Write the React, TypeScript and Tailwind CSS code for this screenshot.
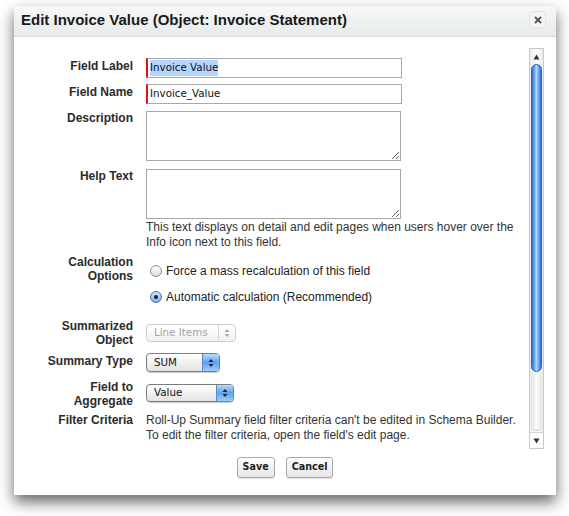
import type { ReactNode } from 'react'

const label =
  "w-[119px] shrink-0 text-right text-[12px] font-bold leading-[14px] text-[#2b2b2b]"
const body = "text-[12px] leading-[15px] text-[#333]"
const ui = "font-['DejaVu_Sans',sans-serif] text-[10.3px]"

function Row({
  name,
  className = '',
  labelClass = '',
  children,
}: {
  name: ReactNode
  className?: string
  labelClass?: string
  children: ReactNode
}) {
  return (
    <div className={`flex ${className}`}>
      <div className={`${label} ${labelClass}`}>{name}</div>
      <div className="ml-[13px] min-w-0">{children}</div>
    </div>
  )
}

function Arrows({ color }: { color: string }) {
  return (
    <svg width="6" height="10" viewBox="0 0 6 10">
      <path d="M3 1 L5.5 4 L0.5 4 Z" fill={color} />
      <path d="M3 9 L5.5 6 L0.5 6 Z" fill={color} />
    </svg>
  )
}

function Select({
  value,
  className,
  disabled = false,
}: {
  value: string
  className: string
  disabled?: boolean
}) {
  return (
    <div
      className={`flex overflow-hidden rounded-[4px] border ${className} ${
        disabled
          ? 'border-[#cdcdcd] bg-gradient-to-b from-white to-[#f1f1f1] text-[#a6a6a6]'
          : 'border-[#7c7c7c] bg-gradient-to-b from-white to-[#e4e4e4] text-[#111] shadow-[0_1px_1px_rgba(0,0,0,0.2)]'
      }`}
    >
      <span className={`flex flex-1 items-center pl-[7px] ${ui}`}>{value}</span>
      <span
        className={`flex w-[17px] items-center justify-center border-l ${
          disabled
            ? 'border-[#d6d6d6]'
            : 'border-[#5f86c2] bg-gradient-to-b from-[#b9dbfb] via-[#5ea2ee] to-[#9ccdf8]'
        }`}
      >
        <Arrows color={disabled ? '#a9a9a9' : '#1b2536'} />
      </span>
    </div>
  )
}

function Radio({ checked, text }: { checked?: boolean; text: string }) {
  return (
    <label className="flex h-[20px] items-center pl-[4px]">
      <span
        className={`flex h-[12px] w-[12px] items-center justify-center rounded-full border ${
          checked
            ? 'border-[#4d6f9e] bg-gradient-to-b from-[#d3e7fb] to-[#7fb1e6]'
            : 'border-[#8c8c8c] bg-gradient-to-b from-white to-[#dcdcdc]'
        }`}
      >
        {checked && <span className="h-[4px] w-[4px] rounded-full bg-[#14253d]" />}
      </span>
      <span className="ml-[4px] text-[12px] text-[#222]">{text}</span>
    </label>
  )
}

function Area() {
  return (
    <textarea
      readOnly
      className="block h-[50px] w-[255px] resize border border-[#a7a7a7] bg-white"
    />
  )
}

function Button({ children }: { children: ReactNode }) {
  return (
    <button className="h-[21px] rounded-[3px] border border-[#a9a9a9] bg-gradient-to-b from-white to-[#e6e6e6] px-[5px] font-['DejaVu_Sans',sans-serif] text-[9.6px] font-bold text-[#222] shadow-[0_1px_1px_rgba(0,0,0,0.12)]">
      {children}
    </button>
  )
}

export default function App() {
  return (
    <div className="h-[516px] w-[569px] bg-white pl-[14px] pt-[6px] font-['Liberation_Sans',Arial,sans-serif] text-[#333]">
      <div className="flex h-[489px] w-[542px] flex-col bg-white shadow-[0_7px_14px_rgba(0,0,0,0.6)]">
        {/* title bar */}
        <header className="flex h-[31px] shrink-0 justify-between border-b border-[#d3d8d8] bg-gradient-to-b from-[#f7f8f8] to-[#e8ebeb] pl-[7px] pr-[10px]">
          <h1 className="mt-[5px] text-[15px] font-bold leading-[18px] text-[#1a1a1a]">
            Edit Invoice Value (Object: Invoice Statement)
          </h1>
          <button className="mt-[5px] flex h-[17px] w-[17px] items-center justify-center rounded-[2px] border border-[#e3e5e5] bg-[#f2f3f3]">
            <svg width="8" height="8" viewBox="0 0 8 8">
              <path d="M1 1 L7 7 M7 1 L1 7" stroke="#555" strokeWidth="1.8" />
            </svg>
          </button>
        </header>

        {/* scrolling form */}
        <div className="mt-[11px] flex h-[401px] shrink-0">
          <div className="flex-1 pt-[10px]">
            <Row name="Field Label" labelClass="pt-[1px]">
              <div className={`flex h-[20px] w-[256px] items-center border border-l-2 border-[#a9a9a9] border-l-[#d9141b] pl-[2px] ${ui} text-[#111]`}>
                <span className="bg-[#b5d5ff]">Invoice Value</span>
              </div>
            </Row>
            <Row name="Field Name" className="mt-[6px]" labelClass="pt-[1px]">
              <div className={`flex h-[20px] w-[256px] items-center border border-l-2 border-[#a9a9a9] border-l-[#d9141b] pl-[2px] ${ui} text-[#111]`}>
                Invoice_Value
              </div>
            </Row>
            <Row name="Description" className="mt-[7px]">
              <Area />
            </Row>
            <Row name="Help Text" className="mt-[8px]">
              <Area />
              <p className={`mt-[1px] w-[375px] ${body}`}>
                This text displays on detail and edit pages when users hover over the Info icon next to this field.
              </p>
            </Row>
            <Row name={<>Calculation<br />Options</>} className="mt-[5px]">
              <div className="pt-[6px]">
                <Radio text="Force a mass recalculation of this field" />
                <div className="mt-[6px]">
                  <Radio checked text="Automatic calculation (Recommended)" />
                </div>
              </div>
            </Row>
            <Row name={<>Summarized<br />Object</>} className="mt-[12px]">
              <div className="pt-[5px]">
                <Select value="Line Items" className="h-[18px] w-[90px]" disabled />
              </div>
            </Row>
            <Row name="Summary Type" className="mt-[6px]" labelClass="pt-[1px]">
              <Select value="SUM" className="h-[19px] w-[74px]" />
            </Row>
            <Row name={<>Field to<br />Aggregate</>} className="mt-[8px]">
              <div className="pt-[4px]">
                <Select value="Value" className="h-[18px] w-[88px]" />
              </div>
            </Row>
            <Row name="Filter Criteria" className="mt-[5px]">
              <p className={`w-[375px] ${body}`}>
                Roll-Up Summary field filter criteria can't be edited in Schema Builder. To edit the filter criteria, open the field's edit page.
              </p>
            </Row>
          </div>

          {/* scrollbar */}
          <div className="mr-[12px] flex w-[15px] flex-col border border-[#c9c9c9] bg-gradient-to-r from-[#ececec] via-white to-[#ececec]">
            <div className="flex h-[15px] shrink-0 items-center justify-center">
              <svg width="7" height="6" viewBox="0 0 7 6">
                <path d="M3.5 0.5 L6.5 5.5 L0.5 5.5 Z" fill="#333" />
              </svg>
            </div>
            <div className="flex flex-1 flex-col px-[1px]">
              <div className="h-[308px] shrink-0 rounded-full border border-[#2f5fb0] bg-gradient-to-r from-[#2f6ed2] via-[#a8d6ff] to-[#2f6ed2]" />
              <div className="mb-[1px] flex-1 rounded-b-full border-b border-[#cfcfcf] bg-gradient-to-r from-[#e6e6e6] via-[#fbfbfb] to-[#e6e6e6]" />
            </div>
            <div className="flex h-[16px] shrink-0 items-center justify-center border-t border-[#d5d5d5] bg-white">
              <svg width="7" height="6" viewBox="0 0 7 6">
                <path d="M0.5 0.5 L6.5 0.5 L3.5 5.5 Z" fill="#333" />
              </svg>
            </div>
          </div>
        </div>

        {/* footer */}
        <div className="mt-[8px] flex justify-center gap-[11px]">
          <Button>Save</Button>
          <Button>Cancel</Button>
        </div>
      </div>
    </div>
  )
}
